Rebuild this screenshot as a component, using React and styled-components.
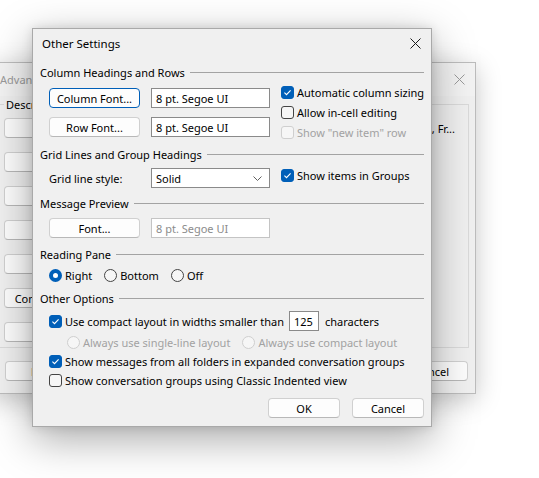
import React from 'react';
import styled, { createGlobalStyle } from 'styled-components';

const GlobalStyle = createGlobalStyle`
  html, body {
    margin: 0;
    padding: 0;
    background: #ffffff;
  }
  body {
    font-family: "Noto Sans", "Open Sans", sans-serif;
    font-size: 11px;
    color: #000;
  }
`;

const CloseIcon = ({ color = '#1a1a1a' }) => (
  <svg width="11" height="11" viewBox="0 0 11 11">
    <path d="M0.5 0.5 L10.5 10.5 M10.5 0.5 L0.5 10.5" stroke={color} strokeWidth="1" fill="none" />
  </svg>
);

const Check = ({ checked, disabled, label }) => (
  <CheckLabel $disabled={disabled}>
    <CheckBox $checked={checked} $disabled={disabled}>
      {checked && (
        <svg width="13" height="13" viewBox="0 0 13 13">
          <path d="M3.4 6.7 L5.5 8.7 L9.6 4.3" stroke="#fff" strokeWidth="1.1" fill="none" />
        </svg>
      )}
    </CheckBox>
    {label}
  </CheckLabel>
);

const Radio = ({ checked, disabled, label }) => (
  <RadioLabel $disabled={disabled}>
    <RadioDot $checked={checked} $disabled={disabled} />
    {label}
  </RadioLabel>
);

const backRows = [
  { label: 'Columns...', text: 'Icon, Attachment, Fr...' },
  { label: 'Group By...', text: '' },
  { label: 'Sort...', text: '' },
  { label: 'Filter...', text: '' },
  { label: 'Other Settings...', text: '' },
  { label: 'Conditional Formatting...', text: '' },
  { label: 'Format Columns...', text: '' },
];

const App = () => {
  return (
    <Desktop>
      <GlobalStyle />

      <BackWindow>
        <BackTitle>
          <span>Advanced View Settings: Compact</span>
          <CloseIcon color="#9a9a9a" />
        </BackTitle>
        <GroupBox>
          <legend>Description</legend>
          {backRows.map(row => (
            <BackRow key={row.label}>
              <BackButton>{row.label}</BackButton>
              <BackText>
                <span>{row.text}</span>
              </BackText>
            </BackRow>
          ))}
        </GroupBox>
        <BackFooter>
          <BackButton>Reset Current View</BackButton>
          <FooterRight>
            <Button $width={72}>OK</Button>
            <Button $width={72}>Cancel</Button>
          </FooterRight>
        </BackFooter>
      </BackWindow>

      <Dialog>
        <TitleBar>
          <span>Other Settings</span>
          <CloseIcon />
        </TitleBar>
        <Body>
          <SectionHeader $top={0}>Column Headings and Rows</SectionHeader>
          <ColumnsContent>
            <FieldCol>
              <FieldRow>
                <Button $width={91} $focused>Column Font...</Button>
                <TextBox>8 pt. Segoe UI</TextBox>
              </FieldRow>
              <FieldRow>
                <Button $width={91}>Row Font...</Button>
                <TextBox>8 pt. Segoe UI</TextBox>
              </FieldRow>
            </FieldCol>
            <CheckCol>
              <CheckRow $height={20}>
                <Check checked label="Automatic column sizing" />
              </CheckRow>
              <CheckRow $height={20}>
                <Check label="Allow in-cell editing" />
              </CheckRow>
              <CheckRow $height={20}>
                <Check disabled label={'Show "new item" row'} />
              </CheckRow>
            </CheckCol>
          </ColumnsContent>

          <SectionHeader $top={4}>Grid Lines and Group Headings</SectionHeader>
          <GridContent>
            <FieldRow>
              <FieldLabel>Grid line style:</FieldLabel>
              <Select>
                <span>Solid</span>
                <svg width="9" height="5" viewBox="0 0 9 5">
                  <path d="M0.5 0.5 L4.5 4.5 L8.5 0.5" stroke="#606060" strokeWidth="1" fill="none" />
                </svg>
              </Select>
            </FieldRow>
            <CheckRow $height={14}>
              <Check checked label="Show items in Groups" />
            </CheckRow>
          </GridContent>

          <SectionHeader $top={7}>Message Preview</SectionHeader>
          <Indent $top={7}>
            <FieldRow>
              <Button $width={91}>Font...</Button>
              <TextBox $disabled>8 pt. Segoe UI</TextBox>
            </FieldRow>
          </Indent>

          <SectionHeader $top={8}>Reading Pane</SectionHeader>
          <OptionRow $top={4} $gap={12}>
            <Radio checked label="Right" />
            <Radio label="Bottom" />
            <Radio label="Off" />
          </OptionRow>

          <SectionHeader $top={6}>Other Options</SectionHeader>
          <OptionRow $top={5} $height={20}>
            <Check checked label="Use compact layout in widths smaller than" />
            <SmallBox>125</SmallBox>
            <span>characters</span>
          </OptionRow>
          <OptionRow $top={2} $indent={18} $gap={12}>
            <Radio disabled label="Always use single-line layout" />
            <Radio disabled label="Always use compact layout" />
          </OptionRow>
          <OptionRow $top={1}>
            <Check checked label="Show messages from all folders in expanded conversation groups" />
          </OptionRow>
          <OptionRow $top={1}>
            <Check label="Show conversation groups using Classic Indented view" />
          </OptionRow>

          <DialogFooter>
            <Button $width={72}>OK</Button>
            <Button $width={72}>Cancel</Button>
          </DialogFooter>
        </Body>
      </Dialog>
    </Desktop>
  );
};

export default App;

const Desktop = styled.div`
  position: relative;
  width: 539px;
  height: 478px;
  overflow: hidden;
  background: #ffffff;
`;

const BackWindow = styled.div`
  position: absolute;
  left: -10px;
  top: 62px;
  width: 486px;
  height: 332px;
  box-sizing: border-box;
  display: flex;
  flex-direction: column;
  background: #f0f0f0;
  border: 1px solid #bcbcbc;
  box-shadow: 0 6px 24px rgba(0, 0, 0, 0.22);
`;

const BackTitle = styled.div`
  display: flex;
  align-items: center;
  justify-content: space-between;
  height: 33px;
  padding: 0 10px 0 9px;
  color: #9a9a9a;
  background: #f3f3f3;
  white-space: nowrap;
`;

const GroupBox = styled.fieldset`
  min-width: 0;
  margin: 1px 6px 0 6px;
  padding: 6px 6px 5px 6px;
  border: 1px solid #dadada;
  display: flex;
  flex-direction: column;
  gap: 14px;

  legend {
    padding: 0 2px;
    color: #000;
  }
`;

const BackRow = styled.div`
  display: flex;
  align-items: center;
  gap: 10px;
  min-width: 0;
`;

const BackButton = styled.div`
  flex: none;
  width: 150px;
  height: 20px;
  box-sizing: border-box;
  display: flex;
  align-items: center;
  justify-content: center;
  white-space: nowrap;
  background: #fdfdfd;
  border: 1px solid #d0d0d0;
  border-bottom-color: #b8b8b8;
  border-radius: 4px;
`;

const BackText = styled.div`
  flex: 1;
  min-width: 0;
  display: flex;
  justify-content: flex-end;
  overflow: hidden;
  white-space: nowrap;
  padding-right: 7px;

  span {
    flex: none;
  }
`;

const BackFooter = styled.div`
  display: flex;
  justify-content: space-between;
  align-items: center;
  margin-top: 13px;
  padding: 0 7px 0 14px;
`;

const FooterRight = styled.div`
  display: flex;
  gap: 12px;
`;

const Dialog = styled.div`
  position: absolute;
  left: 32px;
  top: 28px;
  width: 400px;
  height: 399px;
  box-sizing: border-box;
  display: flex;
  flex-direction: column;
  background: #f0f0f0;
  border: 1px solid #a9a9a9;
  box-shadow: 0 12px 40px rgba(0, 0, 0, 0.34), 0 0 10px rgba(0, 0, 0, 0.12);
`;

const TitleBar = styled.div`
  display: flex;
  align-items: center;
  justify-content: space-between;
  height: 29px;
  padding: 0 10px 0 9px;
  flex: none;
  font-size: 11.5px;
`;

const Body = styled.div`
  display: flex;
  flex-direction: column;
  padding: 6px 7px 0 7px;
`;

const SectionHeader = styled.div`
  display: flex;
  align-items: center;
  height: 16px;
  margin-top: ${p => p.$top}px;
  white-space: nowrap;

  &::after {
    content: '';
    flex: 1;
    height: 1px;
    margin-left: 5px;
    background: #a3a3a3;
  }
`;

const ColumnsContent = styled.div`
  display: flex;
  gap: 11px;
  margin-top: 2px;
  padding-left: 9px;
`;

const FieldCol = styled.div`
  display: flex;
  flex-direction: column;
  gap: 9px;
  padding-top: 6px;
`;

const FieldRow = styled.div`
  display: flex;
  align-items: center;
  gap: 11px;
`;

const CheckCol = styled.div`
  display: flex;
  flex-direction: column;
`;

const CheckRow = styled.div`
  display: flex;
  align-items: center;
  height: ${p => p.$height}px;
`;

const GridContent = styled.div`
  display: flex;
  align-items: flex-start;
  gap: 11px;
  margin-top: 6px;
  padding-left: 9px;
`;

const FieldLabel = styled.div`
  width: 91px;
  white-space: nowrap;
`;

const Indent = styled.div`
  margin-top: ${p => p.$top}px;
  padding-left: 9px;
`;

const Button = styled.div`
  flex: none;
  width: ${p => p.$width}px;
  height: 20px;
  box-sizing: border-box;
  display: flex;
  align-items: center;
  justify-content: center;
  white-space: nowrap;
  background: #fdfdfd;
  border: 1px solid ${p => (p.$focused ? '#005fb8' : '#d0d0d0')};
  border-bottom-color: ${p => (p.$focused ? '#005fb8' : '#b8b8b8')};
  border-radius: 4px;
`;

const TextBox = styled.div`
  width: 119px;
  height: 20px;
  box-sizing: border-box;
  display: flex;
  align-items: center;
  padding: 0 4px;
  white-space: nowrap;
  background: #ffffff;
  border: 1px solid ${p => (p.$disabled ? '#c4c4c4' : '#8a8a8a')};
  color: ${p => (p.$disabled ? '#8c8c8c' : '#000')};
`;

const Select = styled(TextBox)`
  justify-content: space-between;
  padding-right: 7px;
`;

const SmallBox = styled(TextBox)`
  width: 30px;
  margin: 0 6px 0 5px;
`;

const CheckLabel = styled.label`
  display: flex;
  align-items: center;
  gap: 3px;
  white-space: nowrap;
  color: ${p => (p.$disabled ? '#a2a2a2' : '#000')};
`;

const CheckBox = styled.span`
  flex: none;
  width: 13px;
  height: 13px;
  box-sizing: border-box;
  display: flex;
  border-radius: 3px;
  background: ${p => (p.$checked ? '#005fb8' : '#f6f6f6')};
  border: 1px solid
    ${p => (p.$checked ? '#005fb8' : p.$disabled ? '#cfcfcf' : '#444444')};

  svg {
    margin: -1px;
  }
`;

const RadioLabel = styled.label`
  display: flex;
  align-items: center;
  gap: 3px;
  white-space: nowrap;
  color: ${p => (p.$disabled ? '#a2a2a2' : '#000')};
`;

const RadioDot = styled.span`
  flex: none;
  width: 13px;
  height: 13px;
  box-sizing: border-box;
  border-radius: 50%;
  background: ${p => (p.$checked ? '#ffffff' : '#f6f6f6')};
  border: ${p => (p.$checked ? '4px solid #005fb8' : '1px solid')};
  border-color: ${p => (p.$checked ? '#005fb8' : p.$disabled ? '#cfcfcf' : '#444444')};
`;

const OptionRow = styled.div`
  display: flex;
  align-items: center;
  gap: ${p => p.$gap || 0}px;
  height: ${p => p.$height || 18}px;
  margin-top: ${p => p.$top}px;
  padding-left: ${p => 9 + (p.$indent || 0)}px;
`;

const DialogFooter = styled.div`
  display: flex;
  justify-content: flex-end;
  gap: 12px;
  margin-top: 9px;
`;
